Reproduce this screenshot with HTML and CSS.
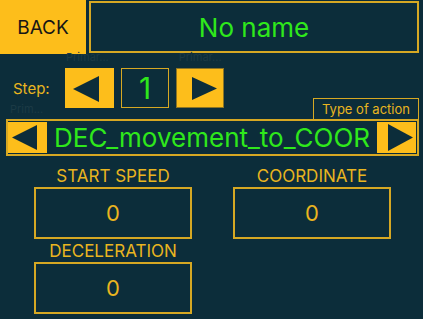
FILE: index.html
```html
<!DOCTYPE html>
<html lang="en">
  <head>
    <meta charset="UTF-8" />
    <meta name="viewport" content="width=device-width, initial-scale=1.0" />
    <title>Action Step</title>
    <link rel="stylesheet" href="styles.css">
  </head>

  <body>
    <div class="screen">
      <div class="top">
        <button class="back">BACK</button>
        <div class="name">No name</div>
      </div>

      <div class="hints">
        <span class="hint">Primar...</span>
        <span class="hint">Primar...</span>
      </div>

      <div class="step">
        <span class="step-label">Step:</span>
        <button class="arrow arrow-left">
          <svg width="49" height="40" viewBox="0 0 49 40"><polygon points="8,21 34,8 34,34" /></svg>
        </button>
        <div class="step-num">1</div>
        <button class="arrow arrow-right">
          <svg width="48" height="40" viewBox="0 0 48 40"><polygon points="16,9 41,20.5 16,32" /></svg>
        </button>
      </div>

      <div class="action">
        <span class="hint hint-prim">Prim...</span>
        <span class="action-tag">Type of action</span>
        <div class="action-row">
          <button class="arrow small">
            <svg width="39" height="31" viewBox="0 0 39 31"><polygon points="4,15.5 29,3 29,28" /></svg>
          </button>
          <div class="action-name">DEC_movement_to_COOR</div>
          <button class="arrow small">
            <svg width="39" height="31" viewBox="0 0 39 31"><polygon points="11,2 36,15.5 11,29" /></svg>
          </button>
        </div>
      </div>

      <div class="fields">
        <div class="field">
          <div class="field-label">START SPEED</div>
          <div class="field-box">0</div>
        </div>
        <div class="field">
          <div class="field-label">COORDINATE</div>
          <div class="field-box">0</div>
        </div>
        <div class="field">
          <div class="field-label">DECELERATION</div>
          <div class="field-box">0</div>
        </div>
      </div>
    </div>
  </body>
</html>
```

FILE: styles.css
```css
body {
  margin: 0;
  padding: 0;
  background-color: #0c2d3a;
  font-family: Inter, "Noto Sans", sans-serif;
}

.screen {
  width: 423px;
  height: 319px;
  overflow: hidden;
}

button {
  font-family: inherit;
  border: none;
  padding: 0;
  cursor: pointer;
}

.top {
  display: flex;
  height: 54px;
}
.back {
  width: 86px;
  height: 54px;
  background-color: #fdbe1b;
  color: #161616;
  font-size: 19px;
}
.name {
  box-sizing: border-box;
  width: 330px;
  height: 52px;
  margin: 1px 0 0 3px;
  border: 2px solid #d6a823;
  color: #2fe81b;
  font-size: 26px;
  display: flex;
  align-items: center;
  justify-content: center;
}

.hints {
  display: flex;
  gap: 70px;
  height: 14px;
  margin-top: -3px;
  padding: 0 0 3px 66px;
}
.hint {
  color: #1b3a45;
  font-size: 11px;
  line-height: 12px;
}

.step {
  display: flex;
  align-items: center;
  height: 40px;
}
.step-label {
  width: 65px;
  padding-left: 13px;
  box-sizing: border-box;
  color: #e9b51f;
  font-size: 15px;
}
.arrow {
  display: flex;
  background-color: #fdbe1b;
}
.arrow svg polygon {
  fill: #0c2d3a;
}
.arrow-left {
  width: 49px;
  height: 40px;
}
.arrow-right {
  width: 48px;
  height: 40px;
  outline: 1px solid #8c7424;
  outline-offset: -1px;
}
.step-num {
  box-sizing: border-box;
  width: 48px;
  height: 40px;
  margin: 0 7px 0 7px;
  border: 1px solid #d6a823;
  color: #2fe81b;
  font-size: 30px;
  display: flex;
  align-items: center;
  justify-content: center;
}

.action {
  position: relative;
  margin: 11px 4px 0 6px;
}
.hint-prim {
  position: absolute;
  left: 4px;
  top: -16px;
}
.action-tag {
  position: absolute;
  right: 0;
  bottom: 100%;
  box-sizing: border-box;
  width: 106px;
  height: 21px;
  border: 1px solid #d6a823;
  border-bottom: none;
  color: #e9b51f;
  font-size: 13px;
  display: flex;
  align-items: center;
  justify-content: center;
}
.action-row {
  box-sizing: border-box;
  height: 37px;
  border: 2px solid #d6a823;
  padding: 1px 1px 1px 0;
  display: flex;
  align-items: center;
}
.arrow.small {
  width: 39px;
  height: 31px;
}
.action-name {
  flex: 1;
  text-align: center;
  color: #2fe81b;
  font-size: 26px;
  white-space: nowrap;
  overflow: hidden;
}

.fields {
  display: grid;
  grid-template-columns: 158px 158px;
  column-gap: 41px;
  padding: 10px 0 0 34px;
  row-gap: 2px;
}
.field-label {
  height: 21px;
  line-height: 21px;
  text-align: center;
  color: #e9b51f;
  font-size: 17px;
}
.field-box {
  box-sizing: border-box;
  height: 52px;
  border: 2px solid #d6a823;
  color: #e9b51f;
  font-size: 22px;
  display: flex;
  align-items: center;
  justify-content: center;
}
```
